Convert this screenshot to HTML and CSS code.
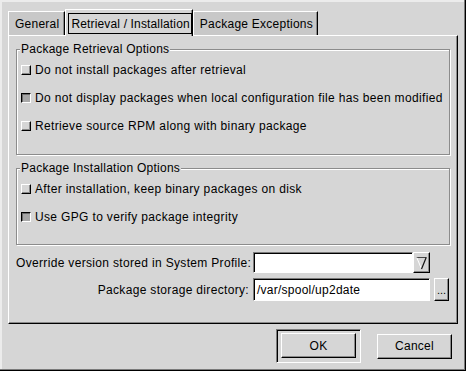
FILE: index.html
```html
<!DOCTYPE html>
<html>
<head>
<meta charset="utf-8">
<link rel="stylesheet" href="styles.css">
</head>
<body>
<div class="window">
  <div class="tabs">
    <div class="tab">General</div>
    <div class="tab active"><span class="focus">Retrieval / Installation</span></div>
    <div class="tab">Package Exceptions</div>
  </div>
  <div class="panel">
    <div class="frame">
      <span class="frame-title">Package Retrieval Options</span>
      <div class="check-row"><span class="check"></span><span>Do not install packages after retrieval</span></div>
      <div class="check-row"><span class="check on"></span><span>Do not display packages when local configuration file has been modified</span></div>
      <div class="check-row"><span class="check"></span><span>Retrieve source RPM along with binary package</span></div>
    </div>
    <div class="frame second">
      <span class="frame-title">Package Installation Options</span>
      <div class="check-row"><span class="check"></span><span>After installation, keep binary packages on disk</span></div>
      <div class="check-row"><span class="check on"></span><span>Use GPG to verify package integrity</span></div>
    </div>
    <div class="form">
      <span class="lbl">Override version stored in System Profile:</span>
      <div class="combo">
        <div class="input grow"></div>
        <div class="combo-btn">
          <svg width="11" height="14" viewBox="0 0 11 14">
            <line x1="0.5" y1="1.5" x2="10.5" y2="1.5" stroke="#444" stroke-width="1"/>
            <line x1="0.8" y1="1.5" x2="5.5" y2="13" stroke="#fff" stroke-width="1"/>
            <line x1="10.2" y1="1.5" x2="5.5" y2="13" stroke="#111" stroke-width="1.2"/>
          </svg>
        </div>
      </div>
      <span class="lbl right">Package storage directory:</span>
      <div class="input tall">/var/spool/up2date</div>
      <div class="btn dots">...</div>
    </div>
  </div>
  <div class="actions">
    <div class="default-ring"><div class="btn big">OK</div></div>
    <div class="btn big">Cancel</div>
  </div>
</div>
</body>
</html>
```

FILE: styles.css
```css
* { box-sizing: border-box; }
html, body { margin: 0; padding: 0; background: #d6d6d6; }
body {
  font-family: "Liberation Sans", Arial, sans-serif;
  font-size: 12px;
  letter-spacing: 0.25px;
  color: #000;
}
.window {
  width: 466px;
  height: 371px;
  padding: 9px 8px 0 8px;
  background: #d6d6d6;
  box-shadow: inset -1px -1px 0 #000, inset -2px -2px 0 #7a7a7a, inset 2px 2px 0 #ececec;
  display: flex;
  flex-direction: column;
}
.tabs {
  display: flex;
  align-items: flex-end;
  height: 26px;
}
.tab {
  height: 24px;
  padding: 0 5px 0 6px;
  display: flex;
  align-items: center;
  background: #c8c8c8;
  border-top: 1px solid #fff;
  border-left: 1px solid #fff;
  border-right: 1px solid #000;
  box-shadow: inset -1px 0 0 #8a8a8a;
  white-space: nowrap;
}
.tab:last-child { padding-right: 4px; }
.tab.active {
  height: 27px;
  margin-bottom: -1px;
  position: relative;
  z-index: 1;
  background: #d6d6d6;
  padding: 3px 0 2px 2px;
  align-items: stretch;
  letter-spacing: 0.15px;
}
.focus {
  border: 1px solid #000;
  padding: 0 1px 0 2px;
  display: flex;
  align-items: center;
}
.panel {
  height: 289px;
  border-top: 1px solid #fff;
  border-left: 1px solid #fff;
  border-right: 1px solid #000;
  border-bottom: 1px solid #000;
  box-shadow: inset -1px -1px 0 #8a8a8a;
  padding: 13px 7px 0 7px;
  display: flex;
  flex-direction: column;
}
.frame {
  border: 1px solid #8c8c8c;
  box-shadow: inset 1px 1px 0 #fff, 1px 1px 0 #fff;
  padding: 0 0 14px 4px;
  display: flex;
  flex-direction: column;
}
.frame.second {
  margin-top: 13px;
  padding-bottom: 13px;
}
.frame-title {
  align-self: flex-start;
  margin: -8px 0 0 -1px;
  padding: 0 1px;
  line-height: 14px;
  background: #d6d6d6;
}
.check-row {
  height: 28px;
  display: flex;
  align-items: center;
  gap: 4px;
  white-space: nowrap;
  letter-spacing: 0.35px;
}
.check {
  width: 10px;
  height: 10px;
  flex: none;
  border-top: 1px solid #fff;
  border-left: 1px solid #fff;
  border-right: 1px solid #000;
  border-bottom: 1px solid #000;
  box-shadow: inset -1px -1px 0 #8a8a8a;
  background: #d6d6d6;
}
.check.on {
  border-top-color: #000;
  border-left-color: #000;
  border-right-color: #fff;
  border-bottom-color: #fff;
  box-shadow: inset 1px 1px 0 #6a6a6a;
  background: #a8a8a8;
}
.form {
  margin-top: 7px;
  display: grid;
  grid-template-columns: 233px 177px 15px;
  grid-template-rows: 21px 23px;
  column-gap: 4px;
  row-gap: 5px;
  align-items: center;
}
.lbl { white-space: nowrap; grid-column: 1; letter-spacing: 0.33px; }
.lbl.right { justify-self: end; }
.combo {
  grid-column: 2;
  display: flex;
  height: 21px;
}
.input {
  background: #fff;
  border-top: 1px solid #7a7a7a;
  border-left: 1px solid #7a7a7a;
  border-right: 1px solid #fff;
  border-bottom: 1px solid #fff;
  box-shadow: inset 1px 1px 0 #000;
  height: 100%;
  display: flex;
  align-items: center;
  padding-left: 3px;
  white-space: nowrap;
}
.input.grow { flex: 1; }
.input.tall { grid-column: 2; }
.combo-btn {
  width: 17px;
  flex: none;
  background: #d6d6d6;
  border-top: 1px solid #fff;
  border-left: 1px solid #fff;
  border-right: 1px solid #000;
  border-bottom: 1px solid #000;
  box-shadow: inset -1px -1px 0 #8a8a8a;
  display: flex;
  align-items: center;
  justify-content: center;
}
.btn {
  background: #d6d6d6;
  border-top: 1px solid #fff;
  border-left: 1px solid #fff;
  border-right: 1px solid #000;
  border-bottom: 1px solid #000;
  box-shadow: inset -1px -1px 0 #8a8a8a;
  display: flex;
  align-items: center;
  justify-content: center;
}
.dots {
  grid-column: 3;
  height: 23px;
  align-items: flex-end;
  padding-bottom: 5px;
  font-size: 11px;
  line-height: 10px;
  letter-spacing: 0;
}
.actions {
  margin-top: 5px;
  display: flex;
  justify-content: flex-end;
  align-items: center;
  gap: 16px;
  padding-right: 6px;
}
.default-ring {
  border-top: 1px solid #7a7a7a;
  border-left: 1px solid #7a7a7a;
  border-right: 1px solid #fff;
  border-bottom: 1px solid #fff;
  box-shadow: inset 1px 1px 0 #000;
  padding: 3px 4px 4px 4px;
}
.btn.big {
  width: 75px;
  height: 25px;
}
```
